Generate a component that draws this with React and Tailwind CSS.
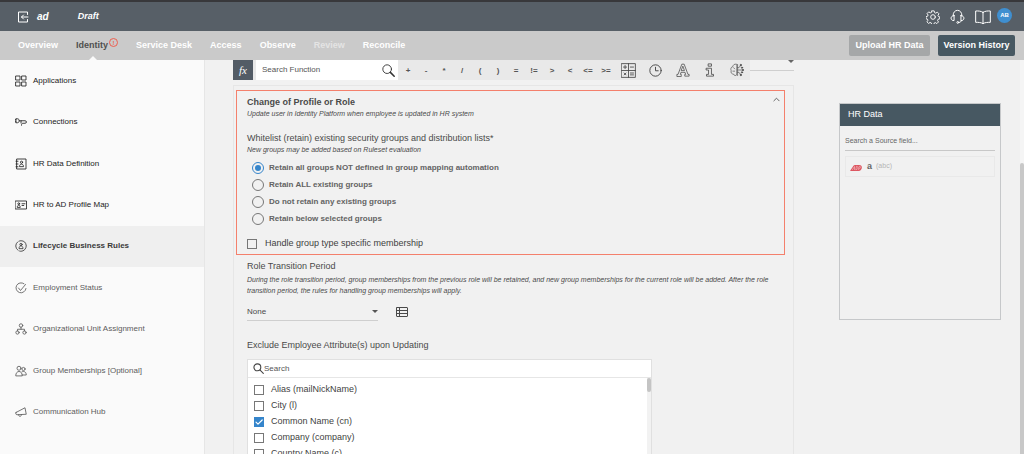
import React from "react";

const stroke = {
  fill: "none",
  stroke: "currentColor",
  strokeLinecap: "round",
  strokeLinejoin: "round",
};

function Svg({ box = "0 0 24 24", width = 1.6, className, children }) {
  return (
    <svg viewBox={box} className={className} strokeWidth={width} aria-hidden="true" {...stroke}>
      {children}
    </svg>
  );
}

const icons = {
  grid: (
    <>
      <rect x="2" y="2" width="8" height="8" />
      <rect x="14" y="2" width="8" height="8" />
      <rect x="2" y="14" width="8" height="8" />
      <rect x="14" y="14" width="8" height="8" />
    </>
  ),
  plug: (
    <>
      <path d="M2.500 5.500H5c4.500 0 4.500 8 0 8H2.500zM0 7.500h2M0 11.500h2M8.500 9.500H12" />
      <path d="M12 14V9.500h8c4 0 4 5 0 5h-4.500c-2 0-2.500 1.500-2.500 4" />
    </>
  ),
  book: (
    <>
      <rect x="4" y="2" width="18" height="20" />
      <path d="M2 6.500h4M2 12h4M2 17.500h4" />
      <circle cx="13" cy="8.500" r="2.200" />
      <path d="M9 16.500c0-6 8-6 8 0z" />
    </>
  ),
  card: (
    <>
      <rect x="1" y="4" width="22" height="16" />
      <circle cx="7.500" cy="9.500" r="1.800" />
      <path d="M4.500 16c0-5 6-5 6 0zM14 9.500h6M14 13h3.500" />
    </>
  ),
  cycle: (
    <>
      <circle cx="12" cy="12" r="10.500" strokeDasharray="19 2.990" />
      <circle cx="12" cy="9" r="2.300" />
      <path d="M8 16.500c0-6.500 8-6.500 8 0z" />
    </>
  ),
  status: (
    <>
      <path d="M18 3.500A10 10 0 1 0 22 13" />
      <path d="M7 12l4 5L21 5" />
    </>
  ),
  org: (
    <>
      <circle cx="12" cy="5" r="3.500" />
      <circle cx="5" cy="19" r="3.300" />
      <circle cx="19" cy="19" r="3.300" />
      <path d="M12 8.500v4M5 16v-3.500h14V16" />
    </>
  ),
  group: (
    <>
      <circle cx="8" cy="6.500" r="4" />
      <circle cx="17" cy="8" r="3.200" />
      <path d="M1.500 21c0-11 13-11 13 0zM14 13.500c5-2 8.500 1 8.500 6.500h-8" />
    </>
  ),
  horn: (
    <>
      <path d="M2 13L20 3.500l2.500 13L4 17.500C1.500 17.500 1 14 2 13z" />
      <path d="M7 17.500c0 4.500 6 4.500 6 0" />
    </>
  ),
};

const menu = [
  { label: "Applications", icon: "grid", done: true },
  { label: "Connections", icon: "plug", done: true },
  { label: "HR Data Definition", icon: "book", done: true },
  { label: "HR to AD Profile Map", icon: "card", done: true },
  { label: "Lifecycle Business Rules", icon: "cycle", active: true },
  { label: "Employment Status", icon: "status" },
  { label: "Organizational Unit Assignment", icon: "org" },
  { label: "Group Memberships [Optional]", icon: "group" },
  { label: "Communication Hub", icon: "horn" },
];

function menuTone(item) {
  if (item.active) return "bg-[#efefef] font-bold text-[#3a3a3a]";
  return item.done ? "text-[#222]" : "text-[#5c5c5c]";
}

function TopBar() {
  return (
    <header className="flex h-[31px] shrink-0 items-center border-t-2 border-[#38383b] bg-[#575f67] pr-3 pl-[17px] text-white">
      <button type="button" aria-label="Back">
        <Svg className="size-3" width={2}>
          <path d="M21 7V2H3v20h18v-5" />
          <path d="M22 12H9M13 8l-4 4 4 4" />
        </Svg>
      </button>
      <span className="ml-2 text-[10px] font-bold italic">ad</span>
      <span className="ml-[29px] text-[9px] font-bold italic">Draft</span>
      <div className="ml-auto flex items-center gap-2.5">
        <button type="button" aria-label="Settings">
          <Svg className="size-3.5" width={1.6}>
            <circle cx="12" cy="12" r="4" />
            <path d="M10 1.500h4l.7 3 2 .9 2.700-1.700 2.800 2.800-1.700 2.700.9 2 2.100.500v3.500l-2.800.7-.9 2 1.600 2.600-2.800 2.800-2.600-1.700-2 .9-.7 2.500h-3.600l-.7-2.800-2-.9-2.600 1.700-2.800-2.800 1.700-2.600-.9-2-2.400-.6v-3.600l2.700-.7.9-2-1.700-2.700 2.800-2.800 2.600 1.700 2-.9z" />
          </Svg>
        </button>
        <button type="button" aria-label="Support">
          <Svg className="size-[15px]" width={1.6}>
            <path d="M5 11C4 -1 20 -1 19 11" />
            <path d="M6.500 10.500v8C0 19 0 10.500 6.500 10.500zM17.500 10.500v8c6.500.5 6.500-8 0-8z" />
            <path d="M18 18.500c0 2-1.500 3-4 3" />
            <circle cx="12.500" cy="21.500" r="1.500" />
          </Svg>
        </button>
        <button type="button" aria-label="Documentation">
          <Svg className="size-4" width={1.5}>
            <path d="M12 5C9 3 5 2.800 1 3v17c4 0 8 0 11 2 3-2 7-2 11-2V3c-4-.2-8 0-11 2zM12 5v17" />
          </Svg>
        </button>
        <button
          type="button"
          className="-ml-1 mb-[3px] flex size-[15px] items-center justify-center rounded-full bg-[#3f8fd0] text-[6px] font-bold"
        >
          AB
        </button>
      </div>
    </header>
  );
}

function NavBar() {
  const rest = ["Service Desk", "Access", "Observe", "Review", "Reconcile"];
  return (
    <nav className="flex h-[29px] shrink-0 items-center gap-[18px] bg-[#cacaca] pr-[9px] pl-[18px] text-[9px] font-bold text-white">
      <a href="#overview">Overview</a>
      <a href="#identity" className="relative flex h-full items-center pr-2.5 text-[#4f4f4f]">
        Identity
        <span className="absolute top-[7px] right-0 flex size-[9px] items-center justify-center rounded-full border border-[#ee5f4f] text-[6px] leading-none text-[#ee5f4f]">
          !
        </span>
        <svg viewBox="0 0 8 4" className="absolute bottom-0 left-[13px] h-1 w-2" aria-hidden="true">
          <path d="M0 4L4 0l4 4z" fill="#fafafa" />
        </svg>
      </a>
      {rest.map((label) => (
        <a
          key={label}
          href={"#" + label.toLowerCase().replace(" ", "-")}
          className={label === "Review" ? "text-[#e4e4e4]" : "text-white"}
        >
          {label}
        </a>
      ))}
      <div className="ml-auto flex gap-2">
        <button type="button" className="h-[21px] w-[81px] rounded-[2px] bg-[#a5a7a8]">
          Upload HR Data
        </button>
        <button type="button" className="h-[21px] w-[77px] rounded-[2px] bg-[#475862]">
          Version History
        </button>
      </div>
    </nav>
  );
}

function Sidebar() {
  return (
    <aside className="flex w-[205px] shrink-0 flex-col border-r border-[#e6e6e6] bg-[#fafafa] pb-[21px]">
      {menu.map((item) => (
        <a
          key={item.label}
          href="#section"
          className={"flex flex-1 items-center gap-1.5 pl-[15px] text-[8px] " + menuTone(item)}
        >
          <Svg className="size-3" width={1.7}>
            {icons[item.icon]}
          </Svg>
          {item.label}
        </a>
      ))}
    </aside>
  );
}

const operators = ["+", "-", "*", "/", "(", ")", "=", "!=", ">", "<", "<=", ">="];

function Toolbar() {
  return (
    <div className="flex items-start">
      <div className="flex h-5 shrink-0 items-center bg-[#e9e9e9]">
        <button
          type="button"
          className="mr-[3px] h-5 w-5 bg-[#535c66] font-['Liberation_Serif',serif] text-[11px] leading-none text-white italic"
        >
          fx
        </button>
        <label className="mr-px flex h-full w-[142px] items-center bg-white pr-[3px] pl-1.5">
          <input
            type="text"
            aria-label="Search Function"
            placeholder="Search Function"
            className="w-0 flex-1 text-[8px] text-[#555] outline-none placeholder:text-[#555]"
          />
          <Svg className="size-[13px] text-[#333]" width={1.7}>
            <circle cx="9.500" cy="9.500" r="8" />
            <path d="M15.500 15.500l7 7" strokeWidth="2.800" />
          </Svg>
        </label>
        {operators.map((op) => (
          <button key={op} type="button" className="w-[18px] pt-0.5 text-[8px] font-bold text-[#555]">
            {op}
          </button>
        ))}
        <ToolIcon label="Calculator">
          <Svg className="size-[15px]" width={1.4}>
            <rect x="1" y="1" width="22" height="22" />
            <path d="M12 1v22M1 12h22M4 6.500h5M6.500 4v5M15 6.500h5M5 16l3 3M8 16l-3 3M15 16h5M15 19h5" />
          </Svg>
        </ToolIcon>
        <ToolIcon label="Date and time">
          <Svg className="size-[13px]" width={1.8}>
            <circle cx="12" cy="12" r="10.500" />
            <path d="M12 6v6.500h5" />
          </Svg>
        </ToolIcon>
        <ToolIcon label="Text">
          <Svg className="size-[14px]" width={1.3}>
            <path d="M1.500 22.500v-3h2L10 2h4l6.500 17.500h2v3H15v-3h1.500l-1-3.500h-7l-1 3.500H9v3zM9.500 13h5L12 6z" />
          </Svg>
        </ToolIcon>
        <ToolIcon label="Information">
          <Svg className="size-[14px]" width={1.4}>
            <rect x="9.500" y="1.500" width="5" height="4" />
            <path d="M6 9h8.500v10.500H18v3H6v-3h3.500V12H6z" />
          </Svg>
        </ToolIcon>
        <ToolIcon label="Smart functions">
          <Svg className="size-[14px]" width={1.1}>
            <path d="M11 2C7 1 5 4 5 6c-4 1-4 5-3 7-1 4 1 6 4 6 1 3 4 3 5 2zM6 8l2 2M5 14h3" />
            <path d="M13 2.500v19M13 8h2.500l2.500-4M13 12h8M13 16h2.500l2.500 4" />
            <g fill="currentColor">
              <circle cx="18.500" cy="3.500" r="1.200" />
              <circle cx="20.500" cy="8" r="1.200" />
              <circle cx="22" cy="12" r="1.200" />
              <circle cx="20.500" cy="16" r="1.200" />
              <circle cx="18.500" cy="20.500" r="1.200" />
            </g>
          </Svg>
        </ToolIcon>
      </div>
      <div className="flex h-[11px] flex-1 items-start justify-end border-b border-[#cfcfcf]">
        <svg viewBox="0 0 6 3" className="h-[3px] w-1.5" aria-hidden="true">
          <path d="M0 0h6L3 3z" fill="#666" />
        </svg>
      </div>
    </div>
  );
}

function ToolIcon({ label, children }) {
  return (
    <button type="button" aria-label={label} className="flex w-[27px] justify-center text-[#4a4a4a]">
      {children}
    </button>
  );
}

function CheckBox({ id, checked }) {
  return (
    <span className="relative flex size-2.5 shrink-0">
      <input
        id={id}
        type="checkbox"
        defaultChecked={checked}
        className="peer size-2.5 appearance-none border border-[#777] checked:border-[#3585cb] checked:bg-[#3585cb]"
      />
      <Svg
        box="0 0 10 10"
        width={1.2}
        className="pointer-events-none absolute inset-0 hidden text-white peer-checked:block"
      >
        <path d="M2 5.200l2 2L8.200 3" />
      </Svg>
    </span>
  );
}

const retainOptions = [
  "Retain all groups NOT defined in group mapping automation",
  "Retain ALL existing groups",
  "Do not retain any existing groups",
  "Retain below selected groups",
];

function ProfileChange() {
  return (
    <section className="mr-2 ml-0.5 border border-[#f4806c] pt-[5px] pr-1 pb-0.5 pl-2.5">
      <div className="flex items-start justify-between">
        <h2 className="text-[9px] leading-3 font-bold text-[#4a4a4a]">Change of Profile or Role</h2>
        <button type="button" aria-label="Collapse">
          <Svg box="0 0 8 8" width={1} className="size-[7px] text-[#555]">
            <path d="M1 5.500l3-3 3 3" />
          </Svg>
        </button>
      </div>
      <p className="text-[7px] leading-[11px] text-[#4a4a4a] italic">
        Update user in Identity Platform when employee is updated in HR system
      </p>
      <fieldset className="mt-[13px]">
        <legend className="text-[9px] leading-3 text-[#4a4a4a]">
          Whitelist (retain) existing security groups and distribution lists*
        </legend>
        <p className="text-[7px] leading-[11px] text-[#4a4a4a] italic">
          New groups may be added based on Ruleset evaluation
        </p>
        <div className="mt-1 pl-[5px]">
          {retainOptions.map((label, i) => (
            <label key={label} className="flex h-[17px] items-center gap-[5px] text-[8px] font-bold text-[#636363]">
              <span className="relative flex size-3">
                <input
                  type="radio"
                  name="retain"
                  defaultChecked={i === 0}
                  className="peer size-3 appearance-none rounded-full border border-[#777] checked:border-[#3585cb]"
                />
                <span className="pointer-events-none absolute inset-[3px] hidden rounded-full bg-[#3585cb] peer-checked:block" />
              </span>
              {label}
            </label>
          ))}
        </div>
      </fieldset>
      <label htmlFor="group-type" className="mt-[9px] flex h-4 items-center gap-2 text-[9px] text-[#3f3f3f]">
        <CheckBox id="group-type" />
        Handle group type specific membership
      </label>
    </section>
  );
}

const attributes = [
  { label: "Alias (mailNickName)" },
  { label: "City (l)" },
  { label: "Common Name (cn)", checked: true },
  { label: "Company (company)" },
  { label: "Country Name (c)" },
];

function AttributeList() {
  return (
    <div className="mt-2 w-[405px] max-w-full border border-[#e0e0e0] bg-white">
      <label className="flex h-[18px] items-center border-b border-[#e6e6e6] pl-[5px]">
        <Svg className="size-[11px] text-[#444]" width={2.4}>
          <circle cx="9.500" cy="9.500" r="7.500" />
          <path d="M15.500 15.500l7 7" />
        </Svg>
        <input
          type="text"
          aria-label="Search attributes"
          placeholder="Search"
          className="w-0 flex-1 text-[8px] text-[#555] outline-none placeholder:text-[#555]"
        />
      </label>
      <div className="flex">
        <ul className="flex-1 pt-1 pl-1.5">
          {attributes.map((a, i) => (
            <li key={a.label}>
              <label
                htmlFor={"attribute-" + i}
                className="flex h-4 items-center gap-[7px] text-[9px] text-[#3f3f3f]"
              >
                <CheckBox id={"attribute-" + i} checked={a.checked} />
                {a.label}
              </label>
            </li>
          ))}
        </ul>
        <div className="w-1 bg-[#f2f2f2]">
          <div className="h-3.5 rounded-full bg-[#c4c4c4]" />
        </div>
      </div>
    </div>
  );
}

function RulesPanel() {
  return (
    <div className="mt-[5px] border border-[#e6e6e6] pt-1">
      <ProfileChange />
      <div className="mt-[5px] pr-[22px] pl-[13px] text-[#4a4a4a]">
        <h3 className="text-[9px] leading-3">Role Transition Period</h3>
        <p className="mt-0.5 text-[7px] leading-[11px] italic">
          During the role transition period, group memberships from the previous role will be retained,
          and new group memberships for the current role will be added. After the role transition period,
          the rules for handling group memberships will apply.
        </p>
        <div className="mt-[7px] flex items-center gap-[18px]">
          <div className="relative w-[131px]">
            <select
              aria-label="Role Transition Period"
              className="block h-[18px] w-full appearance-none border-b border-[#cfcfcf] text-[8px] outline-none"
            >
              <option>None</option>
            </select>
            <svg
              viewBox="0 0 6 3"
              className="pointer-events-none absolute top-[7px] right-0 h-[3px] w-1.5"
              aria-hidden="true"
            >
              <path d="M0 0h6L3 3z" fill="#555" />
            </svg>
          </div>
          <button type="button" aria-label="Open table">
            <Svg box="0 0 12 10" width={1} className="h-2.5 w-3">
              <rect x="0.500" y="0.500" width="11" height="9" rx="0.500" />
              <path d="M3.500 0.500v9M0.500 3.500h11M0.500 6.500h11" />
            </Svg>
          </button>
        </div>
        <h3 className="mt-[18px] text-[9px] leading-3">Exclude Employee Attribute(s) upon Updating</h3>
        <AttributeList />
      </div>
    </div>
  );
}

function SourcePanel() {
  return (
    <aside className="mt-[43px] h-[217px] w-[162px] shrink-0 border border-[#c6c8ca]">
      <h2 className="flex h-[22px] items-center bg-[#475862] pl-2 text-[9px] text-white">HR Data</h2>
      <div className="px-[5px]">
        <input
          type="text"
          aria-label="Search a Source field"
          placeholder="Search a Source field..."
          className="mt-[5px] h-[19px] w-full border-b border-[#c8c8c8] text-[7px] outline-none placeholder:text-[#666]"
        />
        <div className="mt-[5px] flex h-[21px] items-center gap-[5px] border border-[#e9e9e9] pl-1">
          <svg viewBox="0 0 24 12" className="mt-1 h-1.5 w-3" role="img" aria-label="ADP">
            <path d="M0 12L7 1.500Q8 0 10 0h9c7 0 6 12-2 12z" fill="#dd5560" />
            <path
              d="M4.500 10L9 3v7M11.500 9.500L13 2.500c4 0 4 7-1.500 7M17 10l1.500-7.500c4 0 3.500 4.500 0 4.500"
              fill="none"
              stroke="#f5d5d7"
              strokeWidth="1"
            />
          </svg>
          <span className="text-[9px] leading-3 font-bold text-[#666]">a</span>
          <span className="-ml-px text-[7px] text-[#b5b5b5]">(abc)</span>
        </div>
      </div>
    </aside>
  );
}

export default function App() {
  return (
    <div className="flex h-screen flex-col overflow-hidden bg-[#f1f1f1] font-['Liberation_Sans',Arial,sans-serif]">
      <TopBar />
      <NavBar />
      <div className="flex min-h-0 flex-1">
        <Sidebar />
        <main className="flex min-w-0 flex-1 overflow-hidden pr-[19px] pl-7">
          <div className="mr-[45px] min-w-0 flex-1">
            <Toolbar />
            <RulesPanel />
          </div>
          <SourcePanel />
        </main>
        <div className="flex w-1 flex-col bg-[#f5f5f5] pt-[103px]">
          <div className="flex-1 rounded-t-full bg-[#c8c8c8]" />
        </div>
      </div>
    </div>
  );
}
